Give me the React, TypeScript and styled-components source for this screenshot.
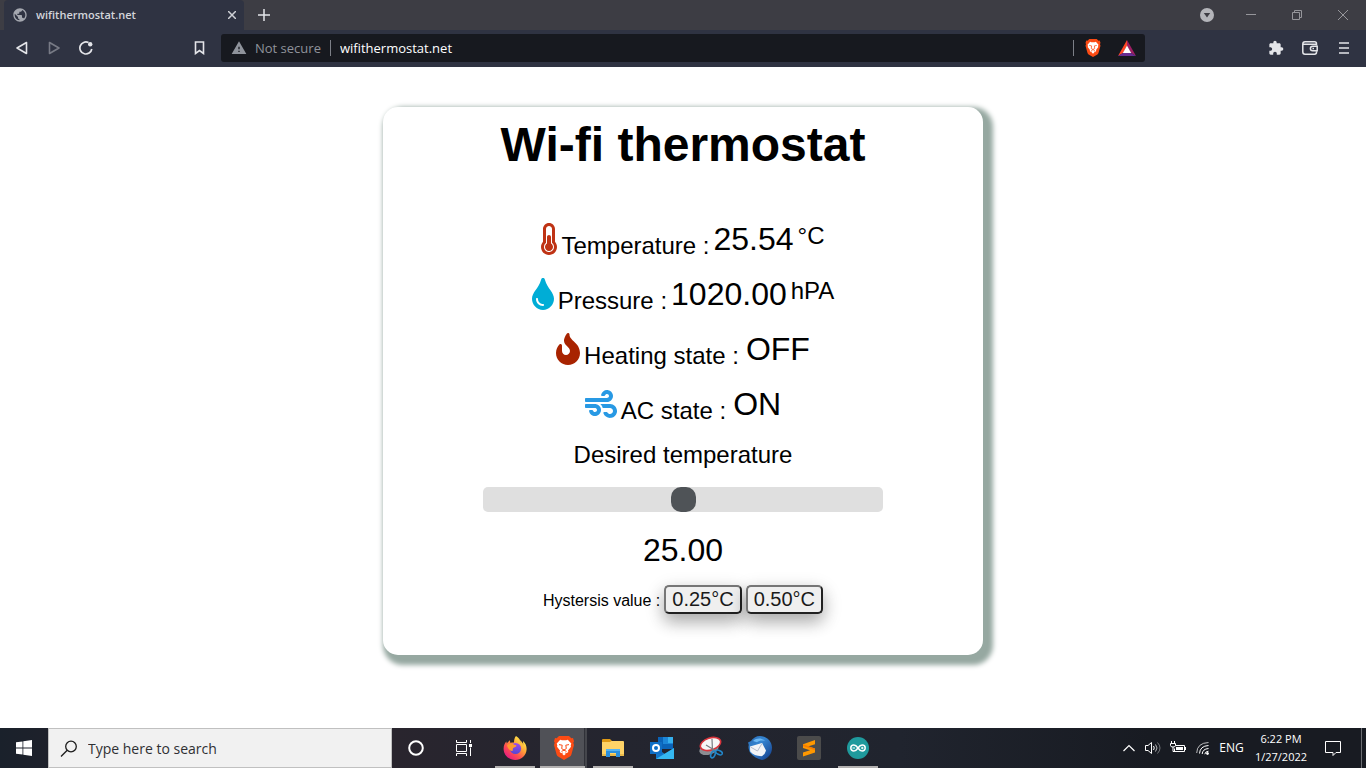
import React, { useState } from "react";
import styled, { createGlobalStyle, css } from "styled-components";
import { FaFire, FaThermometerHalf, FaTint, FaWind } from "react-icons/fa";
import { MdExtension, MdPublic, MdWarning } from "react-icons/md";

const uiFont = `"Segoe UI", "Open Sans", "Noto Sans", sans-serif`;
const pageFont = `Arial, "Liberation Sans", sans-serif`;

const GlobalStyle = createGlobalStyle`
  *, *::before, *::after { box-sizing: border-box; }
  body { margin: 0; background: #fff; }
  svg { display: block; flex: none; }
`;

const Screen = styled.div`
  display: flex;
  flex-direction: column;
  min-height: 100vh;
`;

/* ---------- browser chrome ---------- */

const IconButton = styled.button<{ $width?: number; $dim?: boolean }>`
  display: flex;
  align-items: center;
  justify-content: center;
  flex: none;
  width: ${(p) => p.$width ?? 32}px;
  height: 28px;
  padding: 0;
  border: 0;
  background: none;
  color: #e4e5e9;
  opacity: ${(p) => (p.$dim ? 0.4 : 1)};
`;

const TabStrip = styled.header`
  display: flex;
  align-items: center;
  height: 30px;
  padding-left: 4px;
  background: #3d3d44;
  font-family: ${uiFont};
`;

const Tab = styled.div`
  display: flex;
  align-items: center;
  width: 240px;
  height: 30px;
  padding-left: 8px;
  border-radius: 4px 4px 0 0;
  background: #2f3342;
  color: #a4a7af;

  ${IconButton} { color: #cfd1d6; }
`;

const TabTitle = styled.span`
  flex: 1;
  padding-left: 8px;
  color: #d3d5da;
  font-size: 11px;
  font-weight: 600;
  line-height: 16px;
`;

const WindowControls = styled.div`
  display: flex;
  align-items: center;
  margin-left: auto;

  ${IconButton} { color: #96969b; }
`;

const Toolbar = styled.nav`
  display: flex;
  align-items: center;
  height: 37px;
  padding-bottom: 1px;
  background: #2f3342;
  font-family: ${uiFont};
`;

const ToolGroup = styled.div<{ $end?: boolean }>`
  display: flex;
  align-items: center;
  width: 221px;
  padding: 0 5px 0 6px;
  ${(p) => p.$end && css`justify-content: flex-end;`}
`;

const Spacer = styled.div`
  flex: 1;
`;

const AddressBar = styled.div`
  display: flex;
  align-items: center;
  flex: 1;
  height: 28px;
  padding: 0 2px 0 10px;
  border-radius: 3px;
  background: #17191f;
  color: #a0a3aa;
`;

const Security = styled.button`
  display: flex;
  align-items: center;
  gap: 8px;
  padding: 0;
  border: 0;
  background: none;
  color: #8f939b;
  font: 13px/18px ${uiFont};
`;

const Divider = styled.span`
  width: 1px;
  height: 16px;
  margin-left: 9px;
  background: #7c7f87;
`;

const UrlInput = styled.input`
  flex: 1;
  min-width: 0;
  padding: 0 9px;
  border: 0;
  outline: 0;
  background: none;
  color: #fff;
  font: 13px/18px ${uiFont};
`;

/* ---------- thermostat page ---------- */

const Page = styled.main`
  display: flex;
  flex: 1;
  flex-direction: column;
  align-items: center;
  padding: 40px 16px;
  color: #000;
  font-family: ${pageFont};
`;

const Card = styled.section`
  display: flex;
  flex-direction: column;
  align-items: center;
  width: 100%;
  max-width: 600px;
  padding: 10px 16px 41px;
  border-radius: 15px;
  background: #fff;
  box-shadow: 5px 5px 5px 5px #96a8a1;
`;

const Title = styled.h1`
  margin: 0;
  font-size: 48px;
  line-height: 56px;
`;

const Readings = styled.div`
  display: flex;
  flex-direction: column;
  align-items: center;
  gap: 13px;
  margin-top: 45px;
`;

const Reading = styled.div`
  display: flex;
  align-items: center;
  gap: 4px;
  height: 42px;
`;

const ReadingIcon = styled.span<{ $color: string; $width: number }>`
  color: ${(p) => p.$color};

  svg {
    width: ${(p) => p.$width}px;
    height: 32px;
  }
`;

const ReadingLabel = styled.span<{ $wide?: boolean }>`
  align-self: flex-end;
  padding-right: ${(p) => (p.$wide ? 3 : 0)}px;
  font-size: 24px;
  line-height: 28px;
`;

const Value = styled.span`
  font-size: 32px;
  line-height: 36px;
`;

const Unit = styled.span`
  padding-bottom: 6px;
  font-size: 24px;
  line-height: 28px;
`;

const SliderLabel = styled.label`
  margin-top: 16px;
  font-size: 24px;
  line-height: 28px;
`;

const thumb = css`
  width: 25px;
  height: 25px;
  border: 0;
  border-radius: 10px;
  background: #4f5357;
  cursor: pointer;
`;

const Slider = styled.input`
  appearance: none;
  width: 100%;
  max-width: 400px;
  height: 25px;
  margin: 18px 0 20px;
  border-radius: 5px;
  outline: 0;
  background: #dfdfdf;

  &::-webkit-slider-thumb {
    appearance: none;
    ${thumb}
  }
  &::-moz-range-thumb { ${thumb} }
`;

const Hysteresis = styled.div`
  display: flex;
  align-items: baseline;
  gap: 4px;
  margin-top: 17px;
  font-size: 16px;
  line-height: 20px;
`;

const HysteresisButton = styled.button`
  padding: 1px 6px;
  border: 2px solid;
  border-color: #767676 #212121 #212121 #767676;
  border-radius: 5px;
  background: #efefef;
  box-shadow: 0 8px 16px 0 rgba(0, 0, 0, 0.2), 0 6px 20px 0 rgba(0, 0, 0, 0.19);
  color: #1a1a1a;
  font: 20px/23px ${pageFont};
`;

/* ---------- taskbar ---------- */

const Taskbar = styled.footer`
  display: flex;
  height: 40px;
  background: linear-gradient(90deg, #1a212b 0, #1e212b 48px, #29252e 392px, #24252f 620px, #20242e 900px, #181b22 1150px);
  color: #fff;
  font-family: ${uiFont};
`;

const StartButton = styled(IconButton)`
  width: 48px;
  height: 40px;
`;

const SearchBox = styled.label`
  display: flex;
  align-items: center;
  flex: 0 1 344px;
  gap: 10px;
  padding: 1px 11px 0;
  border: 1px solid #c0c0c0;
  background: #f1f1f1;
  color: #1c1c1c;
`;

const SearchInput = styled.input`
  flex: 1;
  min-width: 0;
  padding: 0;
  border: 0;
  outline: 0;
  background: none;
  font: 14px/20px ${uiFont};

  &::placeholder { color: #2f3033; opacity: 1; }
`;

const Apps = styled.div`
  display: flex;
  padding-left: 2px;
`;

const runningLine = "linear-gradient(#b3b1b1, #b3b1b1) no-repeat";
const activeFill =
  "linear-gradient(90deg, transparent 1px, #505157 1px, #505157 45px, #303138 45px, #303138 46px, #45464c 46px, #45464c 48px, transparent 48px)";

const AppButton = styled.button<{ $running?: boolean; $active?: boolean }>`
  display: flex;
  align-items: center;
  justify-content: center;
  width: 49px;
  height: 40px;
  padding: 0;
  border: 0;
  background: none;
  ${(p) => p.$running && css`background: ${runningLine} 5px 100% / 40px 2px;`}
  ${(p) => p.$active && css`background: ${runningLine} 1px 100% / 45px 2px, ${activeFill};`}
`;

const Tray = styled.div`
  display: flex;
  align-items: center;
  margin-left: auto;
`;

const TrayButton = styled(IconButton)<{ $clock?: boolean }>`
  height: 40px;
  color: #fff;
  font: ${(p) => (p.$clock ? 11 : 12)}px/18px ${uiFont};
`;

const ShowDesktop = styled.button`
  width: 5px;
  height: 40px;
  margin-left: 9px;
  padding: 0;
  border: 0;
  border-left: 1px solid #6b6d72;
  background: none;
`;

/* ---------- drawings ---------- */

type LineProps = { d: string; size?: number; width?: number; join?: "round" | "miter" };

const Line = ({ d, size = 16, width = 1, join = "miter" }: LineProps) => (
  <svg width={size} height={size} viewBox={`0 0 ${size} ${size}`} fill="none" stroke="currentColor" strokeWidth={width} strokeLinejoin={join}>
    <path d={d} />
  </svg>
);

const BraveLogo = ({ w, h }: { w: number; h: number }) => (
  <svg width={w} height={h} viewBox="0 0 20 24">
    <path fill="#fb4b14" d="M5 0h10l2.300 2.200 1.700-.2 1 3.200-.7 1.600.7 2.200-2.600 9.400q-.4 1.300-1.500 2.100L10 24l-5.900-3.500q-1.100-.8-1.500-2.100L0 9l.7-2.200L0 5.200 1 2l1.700.2z" />
    <path fill="#fff" d="M6.200 3.800 8 4.300h4l1.800-.5L17.300 7.600l-.6 1.800.3 1.400-3 3.700.3 1.600-1.700 1.200-.8-.7-1.800.9-1.800-.9-.8.7L5.700 16.100l.3-1.600-3-3.700.3-1.400L2.700 7.600z" />
    <path fill="none" stroke="#fb4b14" strokeWidth="1" d="m5 8.600 3.200.6-.5 3.400L10 14l2.300-1.400-.5-3.400 3.200-.6M7.500 15.400 10 14.200l2.500 1.200" />
    <path fill="#fff" d="M8 17.800 10 16.800l2 1L10 19.600z" />
  </svg>
);

const BatLogo = () => (
  <svg width="18" height="16" viewBox="0 0 18 16">
    <path fill="#ff4724" d="M9 0 0 16l5-3 4-7z" />
    <path fill="#9e1f63" d="m9 0 9 16-5-3-4-7z" />
    <path fill="#662d91" d="M0 16h18l-5-3H5z" />
    <path fill="#fff" d="m9 5.600 4.200 7.400H4.800z" />
  </svg>
);

const WindowsLogo = () => (
  <svg width="16" height="16" viewBox="0 0 16 16" fill="#fff">
    <path d="M0 2.300 6.500 1.400v6.200H0zM7.300 1.300 16 0v7.600H7.300zM0 8.400h6.500v6.200L0 13.700zM7.300 8.400H16V16l-8.700-1.300z" />
  </svg>
);

const TaskView = () => (
  <svg width="16" height="16" viewBox="0 0 16 16" fill="none" stroke="#fff">
    <path d="M.5 0v2.500h10V0M.5 16v-2.500h10V16M.5 4.500h10v7H.5zM14.500 0v3M14.500 7.500V16" />
    <path fill="#fff" stroke="none" d="M13 4h3v3h-3z" />
  </svg>
);

const FirefoxLogo = () => (
  <svg width="24" height="24" viewBox="0 0 24 24">
    <defs>
      <linearGradient id="fx" x1="0.85" y1="0.1" x2="0.15" y2="0.95">
        <stop offset="0" stopColor="#fff44f" />
        <stop offset=".35" stopColor="#ffa436" />
        <stop offset=".65" stopColor="#ff4f4e" />
        <stop offset="1" stopColor="#e31587" />
      </linearGradient>
      <linearGradient id="fxCore" x1="0.5" y1="0" x2="0.4" y2="1">
        <stop offset="0" stopColor="#a04bea" />
        <stop offset="1" stopColor="#5347d1" />
      </linearGradient>
    </defs>
    <path fill="url(#fx)" d="M13 0c3.200 1.800 4.200 4.300 4.600 6.200C19 6.800 19.800 7.700 20.200 8.700L20 5c2.600 2.300 3.800 5.300 3.600 8.500C23.200 19.500 18.300 24 12.200 24 5.800 24 .8 19.200.6 13 .5 9.800 1.800 7 3.400 5.400L3.700 7.500 6.800 4.200 7.500 7c1.100-.5 2.200-.6 3.500-.4C11 4 11.500 1.600 13 0z" />
    <circle cx="12.500" cy="12.500" r="5.600" fill="url(#fxCore)" />
    <path fill="#ff9a2e" d="M4 9c2-1.600 5-1.800 8 0 1.100.1 1.500.5 1.400 1-.3 1.300-2 1-3.200 1.900-.8.8 0 2.300-.8 3.200C6.200 14.700 4.600 12.300 4 9z" />
    <path fill="#ffbd3f" d="M13 1c4.600 4 6.800 7.800 6.200 12.500 2-2.500 1.500-5.700-.9-8.300C16.900 3.700 14.900 2.700 13 1z" />
  </svg>
);

const ExplorerLogo = () => (
  <svg width="22" height="18" viewBox="0 0 22 18">
    <path fill="#e09a15" d="M0 1q0-1 1-1h7l2 2h11v4H0z" />
    <path fill="#ffd367" d="M0 3h8l1.500-1H21q1 0 1 1v13H0z" />
    <path fill="#e9b94a" d="M0 15h22v2H0z" />
    <path fill="#2b8fdd" d="M4 10h14v8h-4v-4H8v4H4z" />
    <path fill="#55b3f2" d="M4 10h14v2H4z" />
  </svg>
);

const OutlookLogo = () => (
  <svg width="24" height="22" viewBox="0 0 24 22">
    <path fill="#0a63b8" d="M8 0h15v12H8z" />
    <path fill="#1c86d8" d="M13 0h10v7H13z" />
    <path fill="#35b0ee" d="M18 0h5v6h-5z" />
    <path fill="#1277cb" d="m6 11 9 6 9-6v11H6z" />
    <path fill="#35b8f1" d="m24 11-18 11h18z" />
    <path fill="#0f6fc6" d="M0 5h12v12H0z" />
    <circle cx="6" cy="11" r="3" fill="none" stroke="#fff" strokeWidth="2" />
  </svg>
);

const SnipLogo = () => (
  <svg width="24" height="24" viewBox="0 0 24 24" fill="none">
    <ellipse cx="10" cy="13" rx="10" ry="5.500" fill="#8b8d92" transform="rotate(-18 10 13)" />
    <ellipse cx="11.500" cy="8" rx="10.500" ry="6" fill="#f6f6f6" stroke="#d8343c" strokeWidth="1.600" transform="rotate(-18 11.500 8)" />
    <path stroke="#777b80" strokeWidth="1.200" d="m7 9 9 5.500M13 3l.5 12" />
    <ellipse cx="14" cy="18.500" rx="2" ry="3.500" stroke="#2386c8" strokeWidth="1.600" transform="rotate(25 14 18.500)" />
    <ellipse cx="20" cy="16.500" rx="3.500" ry="2" stroke="#2386c8" strokeWidth="1.600" transform="rotate(25 20 16.500)" />
  </svg>
);

const ThunderbirdLogo = () => (
  <svg width="24" height="24" viewBox="0 0 24 24">
    <defs>
      <linearGradient id="tb" x1="0" y1="0" x2="1" y2="1">
        <stop offset="0" stopColor="#2a6cb4" />
        <stop offset=".4" stopColor="#3585d2" />
        <stop offset="1" stopColor="#123a86" />
      </linearGradient>
    </defs>
    <path fill="url(#tb)" d="M12 0c7 0 12 5.400 12 11.800C24 18 20 23 14 24c-4-1-9-3.500-12-7.500C.8 13.500 0 11.500.8 9L0 6.500 3 5C5 2 8 0 12 0z" />
    <path fill="#f3f4f7" d="M2 10.500 14 7l4 7.500q-.8 4-4.500 5.700Q6 20 2.200 15.500z" />
    <path fill="none" stroke="#b5bccb" d="m2.500 11 7 4L14 7.500" />
    <path fill="#6db9f4" d="M5 5c4-3.400 9-3 12 0-3-.8-6-.4-8 1.200z" />
  </svg>
);

const SublimeLogo = () => (
  <svg width="24" height="24" viewBox="0 0 24 24">
    <rect width="24" height="24" rx="2" fill="#4b4b4b" />
    <path fill="#ff9800" d="M6 8.200 18 4v4.200L11 10.500l7 2.100v4L6 20.500v-4l7-2.300-7-2.100z" />
    <path fill="#f57c00" d="m6 8.200 12 4.400v1.600L6 10z" />
  </svg>
);

const ArduinoLogo = () => (
  <svg width="22" height="22" viewBox="0 0 22 22">
    <circle cx="11" cy="11" r="11" fill="#1f9a9d" />
    <g fill="none" stroke="#fff" strokeWidth="1.500">
      <path d="M11 11C9.500 8.800 8.400 8 6.800 8a3 3 0 0 0 0 6C8.400 14 9.500 13.200 11 11s2.600-3 4.200-3a3 3 0 0 1 0 6c-1.600 0-2.700-.8-4.200-3z" />
      <path strokeWidth="1" d="M5.500 11h2.500M14 11h2.500M15.250 9.800v2.400" />
    </g>
  </svg>
);

const Battery = () => (
  <svg width="16" height="14" viewBox="0 0 16 14" fill="none" stroke="#fff">
    <path d="M5.500 4.500h9v6h-10v-3M15.500 6v3M1.500 0v2.500M4.500 0v2.500M.5 2.500h5v2q0 1.500-2.500 1.500T.5 4.500zM3 6v4.500h2" />
    <path fill="#fff" stroke="none" d="M6 6h7v3H6z" />
  </svg>
);

const Speaker = () => (
  <svg width="16" height="14" viewBox="0 0 16 14" fill="none" stroke="#fff">
    <path d="M.5 4.500H3L6.500 1.500v11L3 9.500H.5z" />
    <path d="M8.500 5q1.500 2 0 4" />
    <path opacity=".7" d="M10.500 3.500q3 3.500 0 7" />
    <path opacity=".4" d="M12.500 1.500q5 5.500 0 11" />
  </svg>
);

const Wifi = () => (
  <svg width="14" height="14" viewBox="0 0 14 14" fill="none" stroke="#fff">
    <path opacity=".7" d="M.7 12Q1 2 12.500 1.500" />
    <path d="M3.500 12.500Q4 5 12.500 4.500M6.200 13Q6.500 8 12.500 7.500M8.800 13.200q.3-2.700 3.700-3" />
    <circle cx="11.500" cy="12.500" r="1" fill="#fff" />
  </svg>
);

const Wallet = () => (
  <svg width="16" height="14" viewBox="0 0 16 14" fill="none" stroke="currentColor" strokeWidth="1.500">
    <path d="M14.500 4.500V2.700Q14.500.8 12.600.8H3Q.8.800.8 3v8q0 2.200 2.200 2.200h9.600q1.900 0 1.900-1.900v-1M1 3.200h13.500" />
    <path d="M15.200 5.200h-4.500a2.300 2.300 0 0 0 0 4.600h4.500zM10.500 7.500h1.500" />
  </svg>
);

const DropBadge = () => (
  <svg width="14" height="14" viewBox="0 0 14 14">
    <circle cx="7" cy="7" r="7" fill="#b4b5ba" />
    <path fill="#3d3d44" d="M3.800 5h6.400L7 9.400z" />
  </svg>
);

/* ---------- data ---------- */

const readings = [
  { label: "Temperature :", value: "25.54", unit: "°C", icon: <FaThermometerHalf />, color: "#bf3315", width: 16 },
  { label: "Pressure :", value: "1020.00", unit: "hPA", icon: <FaTint />, color: "#00add6", width: 22 },
  { label: "Heating state :", value: "OFF", icon: <FaFire />, color: "#a82300", width: 24 },
  { label: "AC state :", value: "ON", icon: <FaWind />, color: "#2899e4", width: 32 },
];

const apps = [
  { name: "Firefox", icon: <FirefoxLogo />, running: true },
  { name: "Brave", icon: <BraveLogo w={20} h={24} />, running: true, active: true },
  { name: "File Explorer", icon: <ExplorerLogo />, running: true },
  { name: "Outlook", icon: <OutlookLogo /> },
  { name: "Snipping Tool", icon: <SnipLogo /> },
  { name: "Thunderbird", icon: <ThunderbirdLogo /> },
  { name: "Sublime Text", icon: <SublimeLogo /> },
  { name: "Arduino", icon: <ArduinoLogo />, running: true },
];

export default function App() {
  const [target, setTarget] = useState(25);

  return (
    <Screen>
      <GlobalStyle />
      <TabStrip>
        <Tab>
          <MdPublic size={16} />
          <TabTitle>wifithermostat.net</TabTitle>
          <IconButton $width={24} aria-label="Close tab">
            <Line size={8} width={1.5} d="M0 0l8 8M8 0L0 8" />
          </IconButton>
        </Tab>
        <IconButton $width={40} aria-label="New tab">
          <Line size={12} width={1.5} d="M6 0v12M0 6h12" />
        </IconButton>
        <WindowControls>
          <IconButton $width={42} aria-label="Search tabs"><DropBadge /></IconButton>
          <IconButton $width={46} aria-label="Minimize"><Line size={10} d="M0 4.500h10" /></IconButton>
          <IconButton $width={46} aria-label="Restore">
            <Line size={10} d="M.5 2.500h7v7h-7zM2.500 2.500v-2h7v7h-2" />
          </IconButton>
          <IconButton $width={46} aria-label="Close"><Line size={10} d="M0 0l10 10M10 0L0 10" /></IconButton>
        </WindowControls>
      </TabStrip>

      <Toolbar>
        <ToolGroup>
          <IconButton aria-label="Back"><Line size={14} width={1.6} join="round" d="M11.500 1.500v11L2 7z" /></IconButton>
          <IconButton aria-label="Forward" $dim>
            <Line size={14} width={1.6} join="round" d="M2.500 1.500v11L12 7z" />
          </IconButton>
          <IconButton aria-label="Reload">
            <svg width="14" height="14" viewBox="0 0 14 14">
              <path fill="none" stroke="currentColor" strokeWidth="1.700" d="M9.500 1.600A6 6 0 1 0 12.800 8" />
              <circle cx="11.200" cy="3.200" r="2.200" fill="currentColor" />
            </svg>
          </IconButton>
          <Spacer />
          <IconButton aria-label="Bookmark"><Line size={14} width={1.6} d="M2.500 1h8v11.500L6.500 9.500l-4 3z" /></IconButton>
        </ToolGroup>
        <AddressBar>
          <Security>
            <MdWarning size={16} />
            Not secure
          </Security>
          <Divider />
          <UrlInput aria-label="Address" defaultValue="wifithermostat.net" />
          <Divider />
          <IconButton $width={37} aria-label="Brave Shields"><BraveLogo w={16} h={18} /></IconButton>
          <IconButton aria-label="Brave Rewards"><BatLogo /></IconButton>
        </AddressBar>
        <ToolGroup $end>
          <IconButton $width={34} aria-label="Extensions"><MdExtension size={16} /></IconButton>
          <IconButton $width={34} aria-label="Wallet"><Wallet /></IconButton>
          <IconButton $width={34} aria-label="Menu"><Line size={12} width={1.6} d="M1 1h10M1 6h10M1 11h10" /></IconButton>
        </ToolGroup>
      </Toolbar>

      <Page>
        <Card>
          <Title>Wi-fi thermostat</Title>
          <Readings>
            {readings.map((r) => (
              <Reading key={r.label}>
                <ReadingIcon $color={r.color} $width={r.width}>{r.icon}</ReadingIcon>
                <ReadingLabel $wide={!r.unit}>{r.label}</ReadingLabel>
                <Value>{r.value}</Value>
                {r.unit && <Unit>{r.unit}</Unit>}
              </Reading>
            ))}
          </Readings>
          <SliderLabel htmlFor="target">Desired temperature</SliderLabel>
          <Slider
            id="target"
            type="range"
            min={15}
            max={35}
            step={0.25}
            value={target}
            onChange={(e) => setTarget(Number(e.target.value))}
          />
          <Value>{target.toFixed(2)}</Value>
          <Hysteresis>
            <span>Hystersis value :</span>
            <HysteresisButton>0.25°C</HysteresisButton>
            <HysteresisButton>0.50°C</HysteresisButton>
          </Hysteresis>
        </Card>
      </Page>

      <Taskbar>
        <StartButton aria-label="Start"><WindowsLogo /></StartButton>
        <SearchBox>
          <svg width="18" height="18" viewBox="0 0 18 18" fill="none" stroke="currentColor" strokeWidth="1.300">
            <circle cx="11" cy="6.500" r="5.300" />
            <path d="M7.200 10.300 1 16.500" />
          </svg>
          <SearchInput aria-label="Search" placeholder="Type here to search" />
        </SearchBox>
        <StartButton aria-label="Cortana">
          <svg width="16" height="16" viewBox="0 0 16 16">
            <circle cx="8" cy="8" r="6.800" fill="none" stroke="#fff" strokeWidth="2" />
          </svg>
        </StartButton>
        <StartButton aria-label="Task View"><TaskView /></StartButton>
        <Apps>
          {apps.map((a) => (
            <AppButton key={a.name} aria-label={a.name} $running={a.running} $active={a.active}>
              {a.icon}
            </AppButton>
          ))}
        </Apps>
        <Tray>
          <TrayButton $width={24} aria-label="Show hidden icons"><Line size={12} width={1.2} d="M.5 9 6 3.500 11.500 9" /></TrayButton>
          <TrayButton $width={24} aria-label="Volume"><Speaker /></TrayButton>
          <TrayButton $width={25} aria-label="Battery"><Battery /></TrayButton>
          <TrayButton $width={25} aria-label="Network"><Wifi /></TrayButton>
          <TrayButton $width={33}>ENG</TrayButton>
          <TrayButton $width={66} $clock>
            <span>
              6:22 PM
              <br />
              1/27/2022
            </span>
          </TrayButton>
          <TrayButton $width={38} aria-label="Notifications">
            <Line size={16} d="M.5 1.500h15v11H11l-3 3v-3H.5z" />
          </TrayButton>
          <ShowDesktop aria-label="Show desktop" />
        </Tray>
      </Taskbar>
    </Screen>
  );
}
